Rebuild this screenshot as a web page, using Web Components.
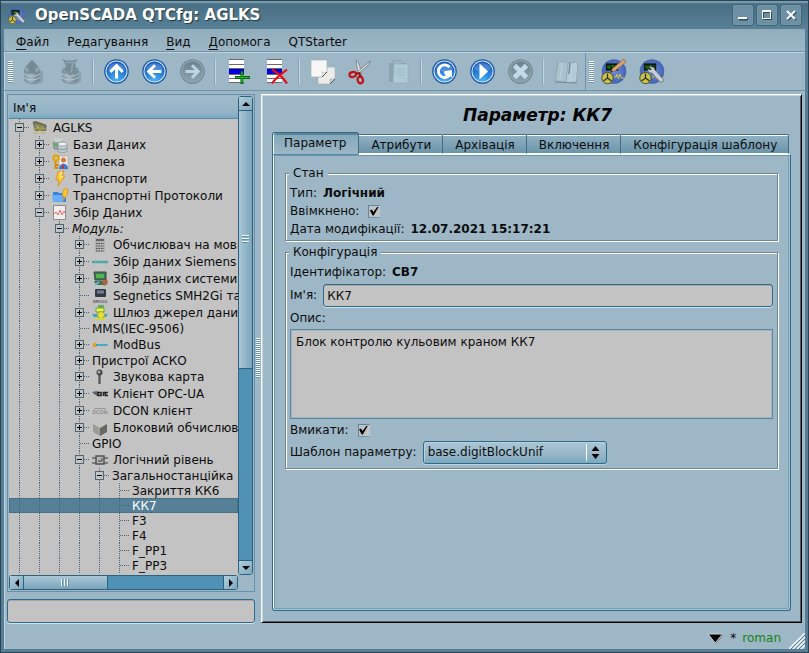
<!DOCTYPE html>
<html lang="uk">
<head>
<meta charset="utf-8">
<title>OpenSCADA QTCfg: AGLKS</title>
<style>
  html, body { height: 100%; margin: 0; }
  body {
    --bg: #9db7c6; --field: #c3c3c3; --line: #5a87a0; --deep: #2f6a8a; --sel: #567f98;
    font: 12px/15px "DejaVu Sans", sans-serif; color: #0c0c0c; background: var(--bg);
  }
</style>
</head>
<body>
<qt-window caption="OpenSCADA QTCfg: AGLKS">
  <qt-menubar slot="menu">
    <qt-menu key="Ф">айл</qt-menu>
    <qt-menu>Редагування</qt-menu>
    <qt-menu key="В">ид</qt-menu>
    <qt-menu key="Д">опомога</qt-menu>
    <qt-menu>QTStarter</qt-menu>
  </qt-menubar>
  <qt-toolbar slot="tools">
    <qt-tool icon="load" label="Завантажити" off></qt-tool>
    <qt-tool icon="save" label="Зберегти" off></qt-tool>
    <qt-sep></qt-sep>
    <qt-tool icon="up" label="Вгору"></qt-tool>
    <qt-tool icon="back" label="Назад"></qt-tool>
    <qt-tool icon="forward" label="Вперед" off></qt-tool>
    <qt-sep></qt-sep>
    <qt-tool icon="add" label="Додати"></qt-tool>
    <qt-tool icon="del" label="Видалити"></qt-tool>
    <qt-sep></qt-sep>
    <qt-tool icon="copy" label="Копіювати"></qt-tool>
    <qt-tool icon="cut" label="Вирізати"></qt-tool>
    <qt-tool icon="paste" label="Вставити" off></qt-tool>
    <qt-sep></qt-sep>
    <qt-tool icon="refresh" label="Оновити"></qt-tool>
    <qt-tool icon="start" label="Запустити"></qt-tool>
    <qt-tool icon="stop" label="Зупинити" off></qt-tool>
    <qt-sep></qt-sep>
    <qt-tool icon="manual" label="Посібник" off></qt-tool>
  </qt-toolbar>
  <qt-toolbar slot="tools">
    <qt-tool icon="vision" label="Розробка"></qt-tool>
    <qt-tool icon="config" label="Конфігуратор"></qt-tool>
  </qt-toolbar>

  <qt-tree slot="side" heading="Ім'я">
    <qt-node depth="0" state="open" icon="station">AGLKS</qt-node>
    <qt-node depth="1" state="closed" icon="db">Бази Даних</qt-node>
    <qt-node depth="1" state="closed" icon="security">Безпека</qt-node>
    <qt-node depth="1" state="closed" icon="bolt">Транспорти</qt-node>
    <qt-node depth="1" state="closed" icon="protocol">Транспортні Протоколи</qt-node>
    <qt-node depth="1" state="open" icon="daq">Збір Даних</qt-node>
    <qt-node depth="2" state="open" style="font-style:italic">Модуль:</qt-node>
    <qt-node depth="3" state="closed" icon="calc">Обчислювач на мові Java</qt-node>
    <qt-node depth="3" state="closed" icon="siemens">Збір даних Siemens</qt-node>
    <qt-node depth="3" state="closed" icon="system">Збір даних системи</qt-node>
    <qt-node depth="3" icon="smh">Segnetics SMH2Gi та</qt-node>
    <qt-node depth="3" state="closed" icon="gate">Шлюз джерел даних</qt-node>
    <qt-node depth="3">MMS(IEC-9506)</qt-node>
    <qt-node depth="3" state="closed" icon="modbus">ModBus</qt-node>
    <qt-node depth="3" state="closed">Пристрої АСКО</qt-node>
    <qt-node depth="3" state="closed" icon="mic">Звукова карта</qt-node>
    <qt-node depth="3" state="closed" icon="opc">Клієнт OPC-UA</qt-node>
    <qt-node depth="3" state="closed" icon="dcon">DCON клієнт</qt-node>
    <qt-node depth="3" state="closed" icon="block">Блоковий обчислювач</qt-node>
    <qt-node depth="3">GPIO</qt-node>
    <qt-node depth="3" state="open" icon="logic">Логічний рівень</qt-node>
    <qt-node depth="4" state="open">Загальностанційка</qt-node>
    <qt-node depth="5">Закриття КК6</qt-node>
    <qt-node depth="5" selected>КК7</qt-node>
    <qt-node depth="5">F3</qt-node>
    <qt-node depth="5">F4</qt-node>
    <qt-node depth="5">F_PP1</qt-node>
    <qt-node depth="5">F_PP3</qt-node>
  </qt-tree>
  <qt-search slot="side"></qt-search>

  <qt-page slot="page" heading="Параметр: КК7">
    <qt-tab slot="tabs" selected>Параметр</qt-tab>
    <qt-tab slot="tabs">Атрибути</qt-tab>
    <qt-tab slot="tabs">Архівація</qt-tab>
    <qt-tab slot="tabs">Включення</qt-tab>
    <qt-tab slot="tabs">Конфігурація шаблону</qt-tab>
    <qt-group heading="Стан">
      <qt-value label="Тип:">Логічний</qt-value>
      <qt-check label="Ввімкнено:"></qt-check>
      <qt-value label="Дата модифікації:">12.07.2021 15:17:21</qt-value>
    </qt-group>
    <qt-group heading="Конфігурація" class="spaced">
      <qt-value label="Ідентифікатор:">СВ7</qt-value>
      <qt-line label="Ім'я:" value="КК7"></qt-line>
      <qt-text label="Опис:" value="Блок контролю кульовим краном КК7"></qt-text>
      <qt-check label="Вмикати:" class="tight"></qt-check>
      <qt-combo label="Шаблон параметру:" value="base.digitBlockUnif"></qt-combo>
    </qt-group>
  </qt-page>
  <qt-status slot="status" user="roman"></qt-status>
</qt-window>

<script>
const disc = (a, b, edge, glyph) => `<defs><radialGradient id="g" cx=".5" cy=".95" r=".9"><stop offset="0" stop-color="${a}"/><stop offset="1" stop-color="${b}"/></radialGradient></defs>
  <circle cx="12.5" cy="12.5" r="12.3" fill="${edge}"/><circle cx="12.5" cy="12.5" r="11" fill="#d4e4f2"/><circle cx="12.5" cy="12.5" r="10" fill="url(#g)"/><path d="M4 10a9 9 0 0 1 17 0c-5 3-12 3-17 0z" fill="#fff" opacity=".2"/>${glyph}`;
const greyDisc = glyph => `<defs><linearGradient id="g" x2="0" y2="1"><stop offset="0" stop-color="#6d828d"/><stop offset="1" stop-color="#8aa2af"/></linearGradient></defs>
  <circle cx="12.5" cy="12.5" r="12.3" fill="#6f848f"/><circle cx="12.5" cy="12.5" r="11.2" fill="#93a9b5"/><circle cx="12.5" cy="12.5" r="10.3" fill="url(#g)"/>${glyph}`;
const blue = g => disc('#49b2f6', '#0f55bd', '#1b55a6', g);
const arrow = (deg, c = '#fff') => `<g transform="rotate(${deg} 12.5 12.5)" fill="none" stroke="${c}" stroke-width="3"><path d="M12.5 19.5V7M6.2 13l6.300-6.300 6.300 6.300"/></g>`;
const barrel = top => `<defs><linearGradient id="g"><stop offset="0" stop-color="#7b909c"/><stop offset=".4" stop-color="#a3b8c3"/><stop offset="1" stop-color="#6c808b"/></linearGradient></defs>
  <path d="M8 24c8 3 14 0 15-2v-9l-3-2z" fill="#8097a3" opacity=".7"/><g fill="url(#g)" stroke="#778c97" stroke-width=".8"><path d="M4.500 11v10c0 4 15 4 15 0V11z"/><path d="M4.500 14.500c0 3.500 15 3.500 15 0M4.500 18c0 3.500 15 3.500 15 0" fill="none" stroke="#adc2cd" stroke-width="1.200"/><ellipse cx="12" cy="11" rx="7.500" ry="2.800" fill="#93a9b5"/></g>${top}`;
const list = mark => `<path d="M3 1h15v22H3z" fill="#fff"/><path d="M3 .500h15M3 5.500h15M3 9.500h15M3 15.500h15M3 19.500h15M3 23.500h15" stroke="#6a6a6a"/><path d="M3 10h15v5H3z" fill="#0000dc"/>${mark}`;
const globe = tool => `<defs><radialGradient id="g"><stop offset="0" stop-color="#6b8cdc"/><stop offset="1" stop-color="#4565b4"/></radialGradient></defs>
  <circle cx="13" cy="12.500" r="12.300" fill="url(#g)"/><path d="M5 4.500h12v7H5z" fill="#061006" stroke="#333" stroke-width=".6"/><path d="M7 6v4M7 8h2M9 6v4M13 6.500h-2v1.500h2v2h-2M15 6v4" stroke="#17a51e" stroke-width=".8" fill="none"/>
  <path d="M13 18h2l1-3 1.500 5 1.500-5 1.500 4h4" fill="none" stroke="#d0c24a" stroke-width="1"/><circle cx="6.500" cy="19" r="5.700" fill="#c9c152" stroke="#4e5224"/><path d="M6.500 19V14.500M6.500 19l4 3M6.500 19l-4 3" stroke="#313716" stroke-width="1.300"/>${tool}`;
const tiny = (t, c, y = 10, s = 5) => `<text x="8" y="${y}" font-family="DejaVu Sans" font-size="${s}" text-anchor="middle" fill="${c}">${t}</text>`;
const ICONS = {
  load: [25, barrel('<path d="M12 .500l7 8h-3.500v6h-7v-6H5z" fill="#71868f" opacity=".9"/>')],
  save: [25, barrel('<path d="M4 0c5 2 11 2 16 0l-3 4 1 5h3l-9 8-7-8h3l-1-5z" fill="#768b96" opacity=".95"/><path d="M8 3c3 1 6 1 8 0l-2 4v4l-2 3" fill="none" stroke="#9bb0bb"/>')],
  up: [25, blue(arrow(0))], back: [25, blue(arrow(-90))],
  forward: [25, greyDisc(arrow(90, '#b9d5e1'))],
  add: [25, list('<path d="M16 12v13M9 18.500h15" stroke="#0b4a12" stroke-width="3"/><path d="M16 12.500v12M9.500 18.500h14" stroke="#18b92a" stroke-width="1.400"/>')],
  del: [25, list('<path d="M8 10.500c5 3 11 8 15 14M23 10.500c-5 4-11 8-15 14" fill="none" stroke="#e60e14" stroke-width="2.200"/>')],
  copy: [25, '<g stroke="#a9b3b8" stroke-width=".7"><path d="M8 8h17v12l-5 5H8z" fill="#ececea"/><path d="M20 25v-5h5z" fill="#ccc"/><path d="M1 1h16v12l-5 5H1z" fill="#f6f6f4"/><path d="M12 18c1-2 1-3 0-5 2 1 3 1 5 0z" fill="#fff"/></g><path d="M12 18l5-5M20 25l5-5" stroke="#555"/>'],
  cut: [25, '<path d="M8.500 1c1 0 3 5 4 10l1 5-2.500 1C10 12 8 4 8.500 1z" fill="#e8e8e8" stroke="#71797d" stroke-width=".8"/><path d="M22.500 2c-1 3-5 7-9 10l-4 3.500-1-2L14 9c4-4 7-6 8.500-7z" fill="#d5d8da" stroke="#71797d" stroke-width=".8"/><g fill="none" stroke="#c01219" stroke-width="2.200"><ellipse cx="4.800" cy="15.500" rx="3.300" ry="2.500" transform="rotate(-12 4.800 15.500)"/><ellipse cx="12.300" cy="21" rx="2.600" ry="3.300" transform="rotate(-15 12.300 21)"/></g><path d="M8 14.500l3.500-.500 1 4" stroke="#9d1015" fill="none" stroke-width="2"/>'],
  paste: [25, '<path d="M3 4h17v19H3z" fill="#8ba2af"/><path d="M7 1.500h9V6H7z" fill="#9fb6c2" stroke="#869daa" stroke-width=".6"/><path d="M8 5h14v19H7z" fill="#aecad6" stroke="#93adba" stroke-width=".7"/><path d="M10 10h9M10 13h9M10 16h9" stroke="#9cb8c5"/>'],
  refresh: [25, blue('<path d="M17.500 8.200A6.300 6.300 0 1 0 18.300 15" fill="none" stroke="#fff" stroke-width="2.900"/><path d="M11.500 12.500l8.500-1.500v7.500l-2.800-2-3 1.500z" fill="#fff"/>')],
  start: [25, blue('<path d="M9.500 4.500v16l8.500-8z" fill="#fff"/>')],
  stop: [25, greyDisc('<path d="M6.500 6.500l12 12M18.500 6.500l-12 12" stroke="#c0dce6" stroke-width="4.800"/>')],
  manual: [25, '<path d="M4 2.500l8 1 2 .500 10-1-1.500 20-9 .500-12.500-1.500z" fill="#b4ccd7" stroke="#879fac" stroke-width=".8"/><path d="M4 2.500L1 22l11 1 2-19" fill="#a9c2ce" stroke="#8ba3b0" stroke-width=".8"/><path d="M8 4L6 21M17.500 4l-1 19" stroke="#bfd5df"/><path d="M16 4l-1 11" stroke="#72899a" stroke-width="1.500"/><path d="M1 23l22 1" stroke="#768d99"/>'],
  vision: [25, globe('<path d="M23 0l2 3-11 9-4.500 1.500 2-4z" fill="#d9a26e" stroke="#8b6747" stroke-width=".7"/><path d="M9.500 13.500l1-2 1.500 1z" fill="#222"/>')],
  config: [25, globe('<path d="M9.500 8c3-1 6 0 6.500 3l8 9c1 2-1 4-3 3l-8-9c-3 0-5-2-4-4l2.500 1 1-1z" fill="#c9ced3" stroke="#52595e" stroke-width=".7"/>')],
  station: [16, '<path d="M1 2l3-.500 10 3.500v5.500H3z" fill="#6f6c5a" stroke="#57574d" stroke-width=".6"/><path d="M2 3l11 3v3H3z" fill="#8a865f"/><path d="M1 9h4l1-3 2 6 2-5 1 2h4M2 13h4M9 13h5" stroke="#b9b14a" fill="none"/>'],
  db: [16, '<path d="M1 3v8c0 3 10 3 10 0V3z" fill="#8fa39b"/><ellipse cx="6" cy="3" rx="5" ry="2" fill="#c8d3cd"/><path d="M1 6c0 3 10 3 10 0" fill="none" stroke="#5cac63" stroke-width="1.500"/><path d="M6 7v7c0 2 9 2 9 0V7z" fill="#c0c9cf" stroke="#76868d" stroke-width=".6"/><ellipse cx="10.500" cy="7" rx="4.500" ry="2" fill="#edf0f1" stroke="#76868d" stroke-width=".6"/><path d="M6 11c0 2 9 2 9 0" fill="none" stroke="#89979c"/>'],
  security: [16, '<rect x="7" y="2" width="9" height="13" rx="1" fill="#eee" stroke="#9a9a9a" stroke-width=".6"/><circle cx="11.500" cy="6" r="2.500" fill="#d57c31"/><path d="M7 15c0-7 9-7 9 0z" fill="#417bd0"/><path d="M11 9l1 5-1 1-1-1z" fill="#d62222"/><path d="M3.500 7v8M4 11h3M4 14h2" stroke="#d68e00" stroke-width="2"/><circle cx="4" cy="4" r="2.700" fill="none" stroke="#e5a506" stroke-width="2.200"/>'],
  bolt: [16, '<path d="M6 1l6-1-2 5h3L6 15l1-6H4z" fill="#ffcb35" stroke="#db8a13" stroke-width=".8"/><path d="M7.500 2L10 1 8 6l3-.500" fill="none" stroke="#fff5ae"/>'],
  protocol: [16, '<path d="M1 4h5l1 1h7v9H1z" fill="#3983db"/><path d="M0 7h12l-1 7H1z" fill="#68aff7"/><path d="M12 1h4l-1 4h1l-5 8 1-5h-2z" fill="#ffc630" stroke="#d48913" stroke-width=".6"/>'],
  daq: [16, '<path d="M1.500.500h12v14h-12z" fill="#f0eeee" stroke="#8a8a8a"/><path d="M2 9l2-2 2 3 2-5 2 5 2-4 1 2" fill="none" stroke="#e56a6a"/>'],
  calc: [16, '<path d="M3 1h10v14H3z" fill="#b2b2b2"/><path d="M4 2h8v2H4z" fill="#666"/><path d="M4 6.500h8M4 9h8M4 11.500h8M4 14h8" stroke="#4a4a4a" stroke-dasharray="1.500 1"/>'],
  siemens: [16, '<path d="M0 8h16" stroke="#3aa5a4" stroke-width="2.300" stroke-dasharray="1.700 .3"/>'],
  system: [16, '<path d="M2 1h12v8H3z" fill="#3b7755" stroke="#444"/><path d="M4 3h8v4H4z" fill="#50b552"/><path d="M2 10h11l2 4H4z" fill="#3e764c"/><path d="M10 10l5-2 1 4-4 3z" fill="#b0643f"/><path d="M3 14l4-3" stroke="#69b5dc" stroke-width="2"/>'],
  smh: [16, '<rect x="3" y="1" width="11" height="8" rx="1" fill="#343a40"/><path d="M5 2.500h7v3H5z" fill="#6c8297"/>' + tiny('SMH2G', '#333', 15, 4)],
  gate: [16, '<path d="M6 0h6v3H6z" fill="#68a957"/><path d="M4 3h8v4H4z" fill="#eff04b" stroke="#6da54a"/><path d="M0 9h16l-2 3H2z" fill="#42a3c0"/><circle cx="9" cy="10" r="3.500" fill="#e4e339" stroke="#a0a737"/><path d="M3 14h11" stroke="#d3d543" stroke-width="2"/>'],
  modbus: [16, '<circle cx="3" cy="8" r="2.300" fill="#e7a319"/><path d="M4 8h12" stroke="#35a3c7" stroke-width="2" stroke-dasharray="2 .4"/>'],
  mic: [16, '<path d="M7.500 4v11" stroke="#555" stroke-width="2.300"/><circle cx="7.500" cy="3.500" r="3" fill="#444"/><circle cx="7" cy="3" r="1.500" fill="#aaa"/>'],
  opc: [16, '<path d="M0 6l5-1 2 2-2 3-3-2z" fill="#5f666b"/><path d="M6 6.500h3v3H6zM11.500 10V6.500h2M16 6.500h-2.500v3H16" fill="none" stroke="#252525" stroke-width="1.600"/>'],
  dcon: [16, '<path d="M2 5.500h12" stroke="#999"/>' + tiny('DCON', '#707070', 11, 5)],
  block: [16, '<path d="M8 0l7 4-7 4-7-4z" fill="#c4c4c0"/><path d="M1 4l7 4v8l-7-4z" fill="#9c9c94"/><path d="M15 4L8 8v8l7-4z" fill="#686863"/>'],
  logic: [16, '<path d="M0 6h4M0 11h4M12 6h4M12 11h4" stroke="#666" stroke-width="1.500"/><path d="M4 4h8v8H4z" fill="#b4b4b4" stroke="#555" stroke-width="1.500"/><path d="M6 9h4V6" stroke="#444" fill="none"/>'],
};

const define = (name, html, setup) => customElements.define(name, class extends HTMLElement {
  constructor() { super(); this.attachShadow({ mode: 'open' }); }
  connectedCallback() {
    if (this.shadowRoot.firstChild) return;
    const t = document.createElement('template');
    t.innerHTML = '<style>*{box-sizing:border-box}:host{box-sizing:border-box}button,input,select,textarea{font:inherit;color:inherit;border-radius:0;margin:0}</style>' + (typeof html === 'function' ? html(this) : html);
    this.shadowRoot.append(t.content.cloneNode(true));
    if (setup) setup(this, this.shadowRoot);
  }
});
const at = (el, n) => el.getAttribute(n) || '';

define('qt-icon', el => {
  const [size, body] = ICONS[at(el, 'name')];
  const shown = at(el, 'size') || size;
  return `<style>:host{display:block;flex:none}svg{display:block;overflow:visible}</style><svg width="${shown}" height="${shown}" viewBox="0 0 ${size} ${size}" aria-hidden="true">${body}</svg>`;
});

define('qt-window', el => `<style>
  :host{display:flex;flex-direction:column;min-height:100vh;border:4px solid #567f97;border-top:0;box-shadow:inset 1px 0 #c0d5df;outline:1px solid #2b4250;outline-offset:-1px}
  header{display:flex;align-items:center;height:29px;padding:1px 1px 0 4px;margin:0 -4px;background:linear-gradient(#2d4654 1px,#7ba0b4 1px,#7ba0b4 2px,#486f83 4px,#588097);color:#fff}
  header qt-icon{margin:0 10px 0 4px}
  h1{flex:1;margin:0;font:bold 15px/20px "DejaVu Sans",sans-serif;text-shadow:1px 1px 1px #1d3440}
  nav{display:flex;gap:2px;margin-right:6px}
  nav button{width:22px;height:22px;padding:0;display:grid;place-items:center;background:#6d90a4;border:1px solid #3e6478;border-radius:3px;box-shadow:inset 0 0 0 1px #7598ab}
  .tools{display:flex;border-top:1px solid #b9d2de;border-bottom:1px solid #6f93a8;height:39px}
  .tools ::slotted(qt-toolbar+qt-toolbar){border-left:1px solid #c3dbe6}
  main{flex:1;display:flex;padding:3px 3px 0}
  aside{flex:0 0 248px;display:flex;flex-direction:column;gap:7px;min-width:0}
  .split{flex:0 0 6px;display:grid;place-items:center start}
  .split i{width:4px;height:40px;margin:0 0 2px 1px;background:repeating-linear-gradient(#fff 0 1px,#5f93b0 1px 2px)}
  ::slotted(qt-page){flex:1;min-width:0}
  </style>
  <header><qt-icon name="config" size="17"></qt-icon><h1>${at(el, 'caption')}</h1>
  <nav>
    <button aria-label="Згорнути"><svg width="12" height="12"><path d="M2 10.500h9" stroke="#2c4a59" stroke-width="2"/><path d="M1 9h9" stroke="#fff" stroke-width="2"/></svg></button>
    <button aria-label="Розгорнути"><svg width="12" height="12"><path d="M2.500 3.500h8v7h-8z" fill="none" stroke="#2c4a59"/><path d="M1.500 2.500h8v7h-8z" fill="none" stroke="#fff"/><path d="M1 2h9" stroke="#fff" stroke-width="2"/></svg></button>
    <button aria-label="Закрити"><svg width="12" height="12"><path d="M3 3l8 8M11 3l-8 8" stroke="#2c4a59" stroke-width="2"/><path d="M2 2l8 8M10 2l-8 8" stroke="#fff" stroke-width="2"/></svg></button>
  </nav></header>
  <slot name="menu"></slot>
  <div class="tools"><slot name="tools"></slot></div>
  <main><aside><slot name="side"></slot></aside><div class="split"><i></i></div><slot name="page"></slot></main>
  <slot name="status"></slot>`);

define('qt-menubar', `<style>:host{display:flex;height:23px;padding:0 3px;background:linear-gradient(#92adbc,#9db7c6);border-bottom:1px solid #6f93a8;align-items:center}</style><slot></slot>`);
define('qt-menu', el => `<style>:host{display:block}button{display:block;border:0;background:none;padding:4px 9px 0}u{text-underline-offset:3px}</style><button><u>${at(el, 'key')}</u><slot></slot></button>`);
define('qt-toolbar', `<style>:host{display:flex;align-items:stretch;padding-left:4px;border-right:1px solid #6f93a8}:host(:last-of-type){border-right:0;padding-left:3px}
  i{width:5px;height:22px;align-self:center;background:repeating-linear-gradient(#fff 0 1px,#6f94a8 1px 2px)}</style><i></i><slot></slot>`);
define('qt-tool', el => `<style>:host{display:flex;width:38px}button{flex:1;border:0;padding:0;background:none;display:grid;place-items:center}</style>
  <button aria-label="${at(el, 'label')}" ${el.hasAttribute('off') ? 'disabled' : ''}><qt-icon name="${at(el, 'icon')}"></qt-icon></button>`);
define('qt-sep', `<style>:host{display:block;width:8px;padding:6px 3px}i{display:block;width:2px;height:100%;background:linear-gradient(90deg,#84a2b3 50%,#bfd8e4 50%)}</style><i></i>`);

define('qt-tree', el => `<style>
  :host{flex:1;display:grid;grid-template:minmax(0,1fr) 15px/minmax(0,1fr) 15px;border:1px solid #6691a8;padding:1px;min-height:300px}
  .view{overflow:hidden;background:var(--field);display:flex;flex-direction:column;min-height:0}
  .head{flex:0 0 23px;display:flex;align-items:center;padding:2px 4px 0;background:linear-gradient(#a1bccb,#93b4c6 75%,#78a9c1);border-bottom:1px solid #5a8aa3}
  .rows{flex:1 1 0;min-height:0;overflow:hidden}
  .bar{display:flex;background:#4f92b5;border:1px solid #2d627f;border-radius:3px;min-width:0;min-height:0}
  .bar button{flex:0 0 14px;padding:0;display:grid;place-items:center;background:linear-gradient(135deg,#b2cedc,#7ea8be);border:0}
  .bar div{display:grid;place-items:center}
  .v{flex-direction:column}.v button:first-child,.v div{border-bottom:1px solid #2d627f}.v button:last-child{border-top:1px solid #2d627f}
  .v div{flex:0 0 54%;background:linear-gradient(90deg,#abc8d8,#7ba4bb)}
  .h button:first-child,.h div{border-right:1px solid #2d627f}.h button:last-child{border-left:1px solid #2d627f}
  .h div{flex:0 0 37%;background:linear-gradient(#abc8d8,#7ba4bb)}
  .v i{width:7px;height:8px;background:repeating-linear-gradient(#fff 0 1px,#5f93b0 1px 2px,#8fb5ca 2px 3px)}
  .h i{width:8px;height:7px;background:repeating-linear-gradient(90deg,#fff 0 1px,#5f93b0 1px 2px,#8fb5ca 2px 3px)}
  .gap{flex:1}</style>
  <div class="view"><div class="head">${at(el, 'heading')}</div><div class="rows" role="tree"><slot></slot></div></div>
  <div class="bar v"><button aria-label="Вгору"><svg width="8" height="4"><path d="M0 4h8L4 0z"/></svg></button><div><i></i></div><span class="gap"></span><button aria-label="Вниз"><svg width="8" height="4"><path d="M0 0h8L4 4z"/></svg></button></div>
  <div class="bar h"><button aria-label="Ліворуч"><svg width="4" height="8"><path d="M4 0v8L0 4z"/></svg></button><div><i></i></div><span class="gap"></span><button aria-label="Праворуч"><svg width="4" height="8"><path d="M0 0v8l4-4z"/></svg></button></div>`);

define('qt-node', el => {
  const state = at(el, 'state'), icon = at(el, 'icon');
  return `<style>
  :host{display:flex;height:${icon ? 17 : 15}px;white-space:nowrap}
  :host([selected]){background:var(--sel);color:#fff;outline:1px dotted #3d6074;outline-offset:-1px}
  .c{flex:0 0 20px;background:linear-gradient(#4d6673 50%,transparent 50%) 10px 0/1px 2px repeat-y;display:grid;align-items:center}
  .own{grid-template-columns:6px 9px 5px}
  .own::after{content:"";grid-area:1/3;height:1px;background:linear-gradient(90deg,#4d6673 50%,transparent 50%) 0 0/2px 1px}
  .leaf::after{grid-column:2/4;margin-left:5px}
  button{grid-area:1/2;width:9px;height:9px;padding:0;background:var(--field);border:1px solid #4d6673;display:grid;place-items:center}
  svg{display:block}
  .t{display:flex;align-items:center;gap:5px;padding:1px 0 0 3px}
  </style>${'<span class="c"></span>'.repeat(+at(el, 'depth'))}<span class="c own ${state ? '' : 'leaf'}">${state ? `<button aria-label="${state === 'open' ? 'Згорнути' : 'Розгорнути'}"><svg width="5" height="5"><path d="M0 2.500h5${state === 'open' ? '' : 'M2.500 0v5'}" stroke="#000"/></svg></button>` : ''}</span>
  <span class="t">${icon ? `<qt-icon name="${icon}"></qt-icon>` : ''}<span><slot></slot></span></span>`;
}, el => el.setAttribute('role', 'treeitem'));

define('qt-search', `<style>:host{display:flex;height:24px}input{flex:1;min-width:0;background:var(--field);border:1px solid var(--deep);border-radius:3px;box-shadow:inset 0 1px #a5a5a5,0 1px #d5e3ea}</style><input type="search" aria-label="Пошук">`);

define('qt-page', el => `<style>
  :host{display:flex;flex-direction:column;padding:2px 10px 11px;border:1px solid;border-color:#fff #000 #000 #fff;box-shadow:inset 1px 1px #c5d8e2,inset -1px -1px #4c616c}
  h2{margin:0;height:35px;padding-left:12px;display:grid;place-items:center;font:italic bold 17px/20px "DejaVu Sans",sans-serif;color:#000}
  .tabs{display:flex;align-items:flex-end;height:23px;margin-bottom:-1px;z-index:1}
  .panel{flex:1;display:flex;flex-direction:column;gap:4px;padding:11px 12px;border:1px solid var(--deep);border-top-color:#fff;border-radius:0 0 3px 3px;
    box-shadow:inset 1px 0 #fff,inset 2px 1px #6697b0,inset -1px -1px #a9c6d4,inset -2px -2px #6f9fb8}
  </style><h2>${at(el, 'heading')}</h2><div class="tabs" role="tablist"><slot name="tabs"></slot></div><div class="panel"><slot></slot></div>`);
define('qt-tab', el => `<style>
  :host{display:block;margin-bottom:1px}:host([selected]){margin-bottom:0}
  button{display:block;height:20px;padding:2px 11px 0 12px;border:1px solid;border-color:#3f6d84 #3f6d84 #fff transparent;border-left:0;border-radius:0 2px 0 0;background:linear-gradient(#fff 1px,#8fb0c2 1px,#6b94aa);white-space:nowrap}
  :host([selected]) button{height:23px;padding:0 12px 0 11px;border:1px solid;border-color:#3c6579 #3f6d84 transparent var(--deep);border-radius:3px 3px 0 0;box-shadow:inset 1px 0 #fff;background:linear-gradient(#5a87a0 2px,#85a9bc 2px,#9db7c6)}
  </style><button role="tab" aria-selected="${el.hasAttribute('selected')}"><slot></slot></button>`);

define('qt-group', el => `<style>
  :host{display:block}
  fieldset{margin:0;min-width:0;padding:4px 4px 2px;border:1px solid #70858f;box-shadow:inset 1px 1px #fff,1px 1px #fff}
  legend{padding:0 4px;margin-left:-1px;height:14px;line-height:14px;background:var(--bg)}
  .body{display:flex;flex-direction:column}
  :host(.spaced) .body{gap:3px}
  :host(.spaced) fieldset{padding-bottom:4px}
  </style><fieldset><legend>${at(el, 'heading')}</legend><div class="body"><slot></slot></div></fieldset>`);
const ROW = ':host{display:flex;align-items:center;gap:6px;min-height:18px}';
define('qt-value', el => `<style>${ROW}</style><span>${at(el, 'label')}</span><b><slot></slot></b>`);
define('qt-check', el => `<style>${ROW}:host(.tight){min-height:16px}
  input{appearance:none;width:12px;height:13px;margin-left:3px;background:var(--field);border:1px solid var(--line);border-right-color:#b4c6cf;border-bottom-color:#6f97ac;display:grid;place-items:center}
  input:checked::before{content:"";width:9px;height:9px;background:#000;clip-path:polygon(0 45%,22% 33%,38% 62%,85% 0,100% 0,42% 100%,30% 100%)}
  </style><label for="f">${at(el, 'label')}</label><input id="f" type="checkbox" checked>`);
define('qt-line', el => `<style>${ROW}
  input{flex:1;min-width:0;height:23px;padding:0 3px;background:var(--field);border:1px solid var(--deep);border-radius:3px;box-shadow:inset 0 1px #a8a8a8,0 1px #cfdfe7}
  </style><label for="f">${at(el, 'label')}</label><input id="f" value="${at(el, 'value')}">`);
define('qt-text', el => `<style>:host{display:grid;gap:3px}label{line-height:16px}
  textarea{display:block;width:100%;height:90px;resize:none;padding:5px;background:var(--field);border:1px solid var(--line);box-shadow:inset 0 0 0 1px #a3b6c0}
  </style><label for="f">${at(el, 'label')}</label><textarea id="f">${at(el, 'value')}</textarea>`);
define('qt-combo', el => `<style>${ROW}
  .box{display:grid;width:184px}
  select,svg{grid-area:1/1}
  select{appearance:none;height:23px;padding:0 24px 0 4px;background:linear-gradient(#a9c6d5,#96b7c8 60%,#7ba8bf);border:1px solid var(--deep);border-radius:3px;box-shadow:inset 1px 1px #b8d3e0,0 1px #bcd3de}
  svg{justify-self:end;align-self:center;pointer-events:none}
  </style><label for="f">${at(el, 'label')}</label><div class="box"><select id="f"><option>${at(el, 'value')}</option></select>
  <svg width="21" height="17"><path d="M.500 0v17" stroke="#fff"/><path d="M5.500 7h8l-4-5zM5.500 10h8l-4 5z"/></svg></div>`);

define('qt-status', el => `<style>
  :host{display:flex;align-items:center;justify-content:flex-end;height:26px;padding-left:8px}
  button{border:0;background:none;padding:0;margin:5px 6px 0 0}svg{display:block}
  .user{color:#138413;margin:4px 8px 0 6px}.star{margin-top:4px}.grip{align-self:flex-end}
  </style><button aria-label="Журнал"><svg width="17" height="12"><path d="M1 1h14.500L8.200 10z" fill="#000" stroke="#d0d4d6" stroke-width="1"/><path d="M8.500 10.700l7.500-9" stroke="#777" fill="none"/></svg></button><span class="star">*</span><span class="user">${at(el, 'user')}</span>
  <svg class="grip" width="16" height="16"><path d="M0 16L16 0M4 16L16 4M8 16L16 8M12 16l4-4" stroke="#fff" stroke-width="1.300"/><path d="M2 16L16 2M6 16L16 6M10 16l6-6" stroke="#54859d"/></svg>`);
</script>
</body>
</html>
